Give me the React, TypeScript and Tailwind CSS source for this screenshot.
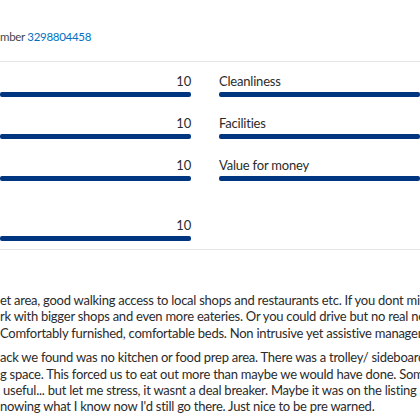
import React from "react";

const leftScores = ["10", "10", "10"];
const rightLabels = ["Cleanliness", "Facilities", "Value for money"];

function ScoreBar({ label, score }: { label?: string; score?: string }) {
  return (
    <div className="flex flex-col">
      <div className="flex h-[18px] items-center justify-between text-[13px] leading-[18px] tracking-[-0.2px] text-[#2b2b2b]">
        <span className="whitespace-nowrap">{label}</span>
        <span>{score}</span>
      </div>
      <div className="mt-[2px] h-[5px] w-full rounded-[2px] bg-[#003580]" />
    </div>
  );
}

const para1 = [
  "et area, good walking access to local shops and restaurants etc. If you dont mind a",
  "rk with bigger shops and even more eateries. Or you could drive but no real need.",
  "Comfortably furnished, comfortable beds. Non intrusive yet assistive management.",
];

const para2 = [
  "ack we found was no kitchen or food prep area. There was a trolley/ sideboard with",
  "g space. This forced us to eat out more than maybe we would have done. Some",
  " useful... but let me stress, it wasnt a deal breaker. Maybe it was on the listing and",
  "nowing what I know now I'd still go there. Just nice to be pre warned.",
];

export default function App() {
  return (
    <div
      className="relative h-[420px] w-[420px] overflow-hidden bg-white text-[#2b2b2b]"
      style={{ fontFamily: "Lato, 'Open Sans', sans-serif" }}
    >
      {/* header */}
      <div className="border-b border-[#e6e6e6] pt-[28px] pb-[15px] text-[11.5px] leading-[18px] tracking-[-0.3px] whitespace-nowrap">
        <span className="text-[#474747]">mber </span>
        <span className="text-[#0071c2]">3298804458</span>
      </div>

      {/* score bars */}
      <div className="border-b border-[#e6e6e6] pt-[10px] pb-[8px]">
        <div className="grid grid-cols-[191px_201px] gap-x-[28px] gap-y-[17px]">
          {leftScores.map((s, i) => (
            <React.Fragment key={i}>
              <ScoreBar score={s} />
              <ScoreBar label={rightLabels[i]} />
            </React.Fragment>
          ))}
          <div className="mt-[18px]">
            <ScoreBar score="10" />
          </div>
        </div>
      </div>

      {/* review text */}
      <div className="pt-[42px] text-[13px] leading-[16.4px] tracking-[-0.25px] text-[#2b2b2b]">
        <div>
          {para1.map((l, i) => (
            <div key={i} className="whitespace-pre">
              {l}
            </div>
          ))}
        </div>
        <div className="mt-[8px]">
          {para2.map((l, i) => (
            <div key={i} className="whitespace-pre">
              {l}
            </div>
          ))}
        </div>
      </div>
    </div>
  );
}
